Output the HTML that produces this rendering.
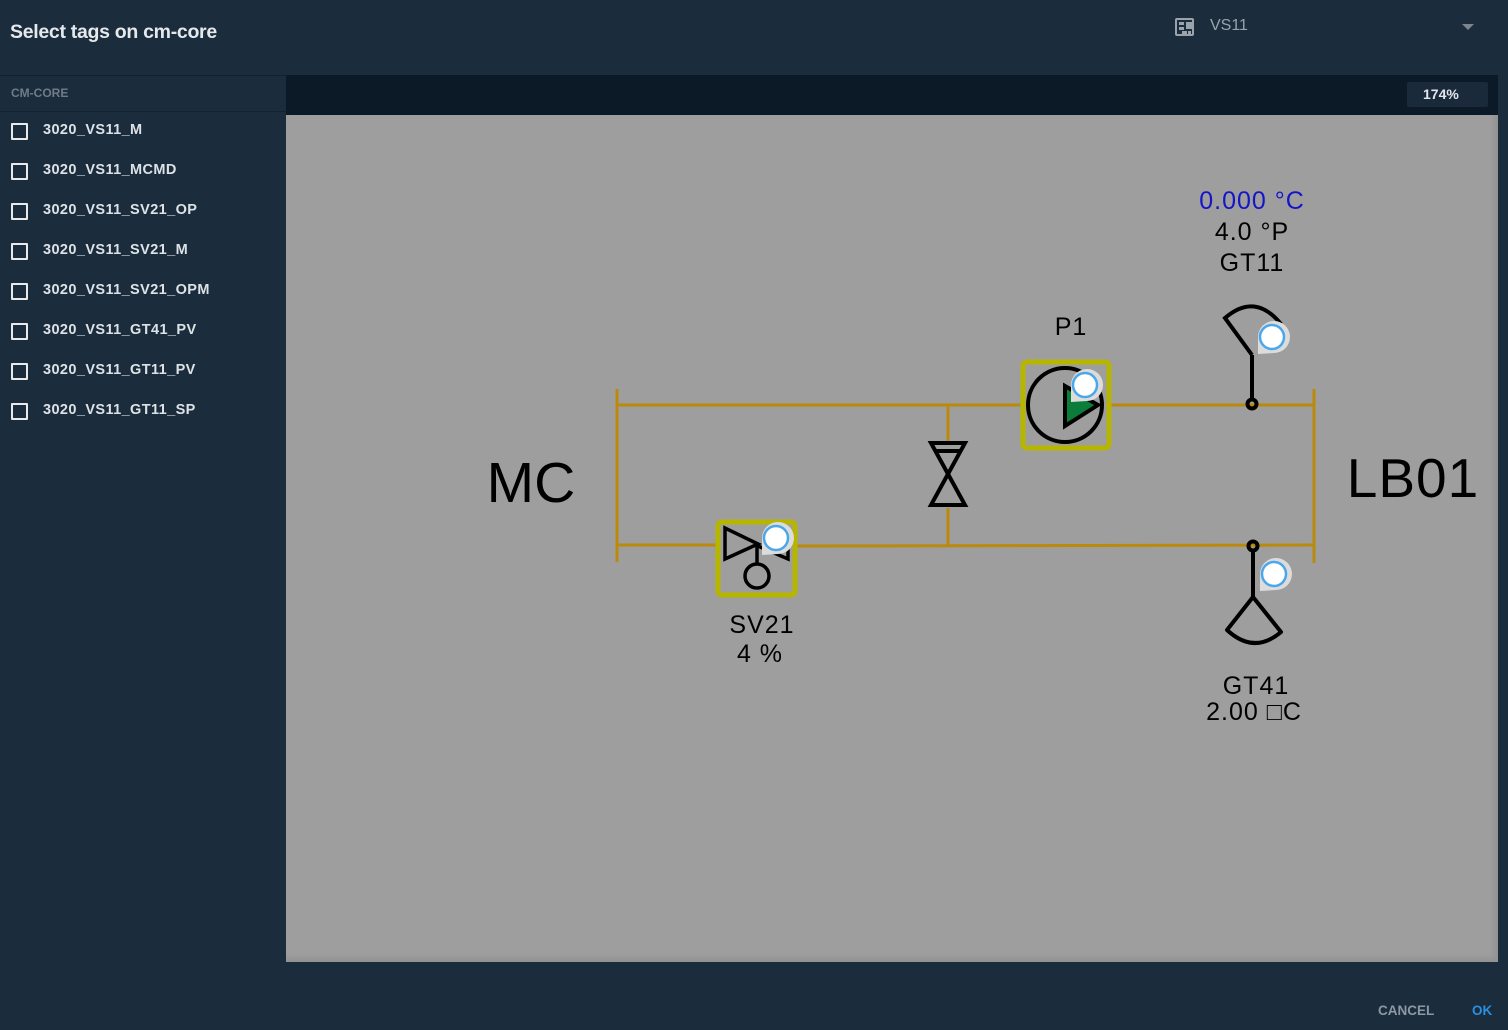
<!DOCTYPE html>
<html><head><meta charset="utf-8"><style>
*{margin:0;padding:0;box-sizing:border-box}
body{width:1508px;height:1030px;background:#1b2c3d;font-family:"Liberation Sans",sans-serif;position:relative;overflow:hidden}
.title{position:absolute;left:10px;top:21px;color:#e6e9ec;font-size:19.5px;font-weight:bold;letter-spacing:-0.3px}
.sel{position:absolute;left:1175px;top:17px;color:#9aa3ab;font-size:16px}
.sel .ic{position:absolute;left:0;top:1px;width:19px;height:18px;border:2px solid #9aa3ab;border-radius:2px}
.sel span.t{position:absolute;left:35px;top:0}
.caret{position:absolute;left:1462px;top:24px;width:0;height:0;border-left:6px solid transparent;border-right:6px solid transparent;border-top:6px solid #7d868e}
.side{position:absolute;left:0;top:75px;width:286px;height:887px;background:#1b2c3d;border-top:1px solid #14222f}
.sh{height:36px;border-bottom:1px solid #15232f;color:#6f7c88;font-size:12px;font-weight:bold;padding:10px 0 0 11px}
.it{position:relative;height:40px;color:#dde2e6;font-size:14.5px;font-weight:bold;letter-spacing:0.4px}
.it .cb{position:absolute;left:11px;top:11px;width:17px;height:17px;border:2px solid #e8eaec;border-radius:1px}
.it .l{position:absolute;left:43px;top:10px}
.tb{position:absolute;left:286px;top:75px;width:1212px;height:40px;background:#0c1926}
.zoom{position:absolute;left:1407px;top:82px;width:81px;height:25px;background:#1a2a3a;border-radius:2px;color:#e4e7ea;font-size:14px;font-weight:bold;line-height:24px;padding-left:16px}
.cv{position:absolute;left:286px;top:115px;width:1212px;height:847px;background:#9e9e9e;box-shadow:inset -4px -4px 6px rgba(0,0,0,0.08)}
.foot{position:absolute;top:1003px;font-size:13.5px;font-weight:bold}
svg{position:absolute;left:0;top:0}
.lb{font-size:25px;letter-spacing:1px}
</style></head><body>
<div class="title">Select tags on cm-core</div>
<div class="sel"><div class="ic"></div><span class="t">VS11</span></div>
<div class="caret"></div>
<div class="side">
<div class="sh">CM-CORE</div>
<div class="it"><div class="cb"></div><div class="l">3020_VS11_M</div></div>
<div class="it"><div class="cb"></div><div class="l">3020_VS11_MCMD</div></div>
<div class="it"><div class="cb"></div><div class="l">3020_VS11_SV21_OP</div></div>
<div class="it"><div class="cb"></div><div class="l">3020_VS11_SV21_M</div></div>
<div class="it"><div class="cb"></div><div class="l">3020_VS11_SV21_OPM</div></div>
<div class="it"><div class="cb"></div><div class="l">3020_VS11_GT41_PV</div></div>
<div class="it"><div class="cb"></div><div class="l">3020_VS11_GT11_PV</div></div>
<div class="it"><div class="cb"></div><div class="l">3020_VS11_GT11_SP</div></div>
</div>
<div class="tb"></div>
<div class="zoom">174%</div>
<div class="cv"></div>
<svg width="1508" height="1030" viewBox="0 0 1508 1030" font-family="Liberation Sans, sans-serif">
<defs>
<g id="bub"><path d="M-14 17 L-14 0 A16 16 0 1 1 2 16 Z" fill="#dcdcdc"/><circle r="12" fill="#fff" stroke="#4aa8ea" stroke-width="2.5"/></g>
</defs>
<g stroke="#bb8a0a" stroke-width="3" fill="none">
<line x1="617" y1="405" x2="1023" y2="405"/>
<line x1="1110" y1="405" x2="1314" y2="405"/>
<line x1="617" y1="389" x2="617" y2="562"/>
<line x1="1314" y1="389" x2="1314" y2="563"/>
<line x1="617" y1="545" x2="718" y2="545"/>
<line x1="795" y1="546" x2="1314" y2="545"/>
<line x1="948" y1="405" x2="948" y2="441"/>
<line x1="948" y1="508" x2="948" y2="546"/>
</g>
<text x="531" y="502" font-size="57" text-anchor="middle">MC</text>
<text x="1413" y="497" font-size="55" text-anchor="middle" letter-spacing="1">LB01</text>
<g stroke="#000" stroke-width="4" fill="none">
<path d="M931 443 L965 443 L931 505 L965 505 Z"/>
<line x1="935" y1="451" x2="961" y2="451"/>
</g>
<rect x="1023" y="362" width="86" height="86" rx="4" fill="none" stroke="#b6b600" stroke-width="5"/>
<circle cx="1065" cy="405" r="37" fill="none" stroke="#000" stroke-width="4"/>
<path d="M1065 386 L1065 426 L1098 405 Z" fill="#0b7c3a" stroke="#000" stroke-width="4"/>
<use href="#bub" x="1085" y="385"/>
<text x="1071" y="335" class="lb" font-size="24" text-anchor="middle">P1</text>
<g stroke="#000" stroke-width="4" fill="none">
<line x1="1252" y1="355" x2="1252" y2="400"/>
<path d="M1252 355 L1225 318 Q1255 292 1281 324"/>
<circle cx="1252" cy="404" r="4.5"/>
</g>
<use href="#bub" x="1272" y="337"/>
<text x="1252" y="209" class="lb" fill="#1414c8" text-anchor="middle">0.000 °C</text>
<text x="1252" y="240" class="lb" text-anchor="middle">4.0 °P</text>
<text x="1252" y="271" class="lb" text-anchor="middle">GT11</text>
<g stroke="#000" stroke-width="4" fill="none">
<circle cx="1253" cy="546" r="4.5"/>
<line x1="1253" y1="551" x2="1253" y2="597"/>
<path d="M1253 597 L1227 630 Q1254 655 1281 632 Z" stroke-linejoin="round"/>
</g>
<use href="#bub" x="1274" y="574"/>
<text x="1256" y="694" class="lb" text-anchor="middle">GT41</text>
<text x="1254" y="720" class="lb" text-anchor="middle">2.00 □C</text>
<rect x="718" y="522" width="77" height="73" rx="4" fill="none" stroke="#b6b600" stroke-width="5"/>
<g stroke="#000" stroke-width="3.5" fill="none">
<path d="M725 528 L725 559 L758 544 Z"/>
<path d="M788 533 L788 559 L758 546"/>
<line x1="757" y1="545" x2="757" y2="564"/>
<circle cx="757" cy="576" r="12"/>
</g>
<use href="#bub" x="776" y="538"/>
<text x="762" y="633" class="lb" text-anchor="middle">SV21</text>
<text x="760" y="662" class="lb" text-anchor="middle">4 %</text>
<g fill="#9aa3ab"><rect x="1179" y="22" width="5" height="3"/><rect x="1179" y="27" width="5" height="3"/><rect x="1186" y="22" width="6" height="7"/><rect x="1182" y="31" width="5" height="3"/><rect x="1188" y="31" width="3" height="3"/></g>
</svg>
<div class="foot" style="left:1378px;color:#8c98a3">CANCEL</div>
<div class="foot" style="left:1472px;color:#2b8fe0">OK</div>
</body></html>
